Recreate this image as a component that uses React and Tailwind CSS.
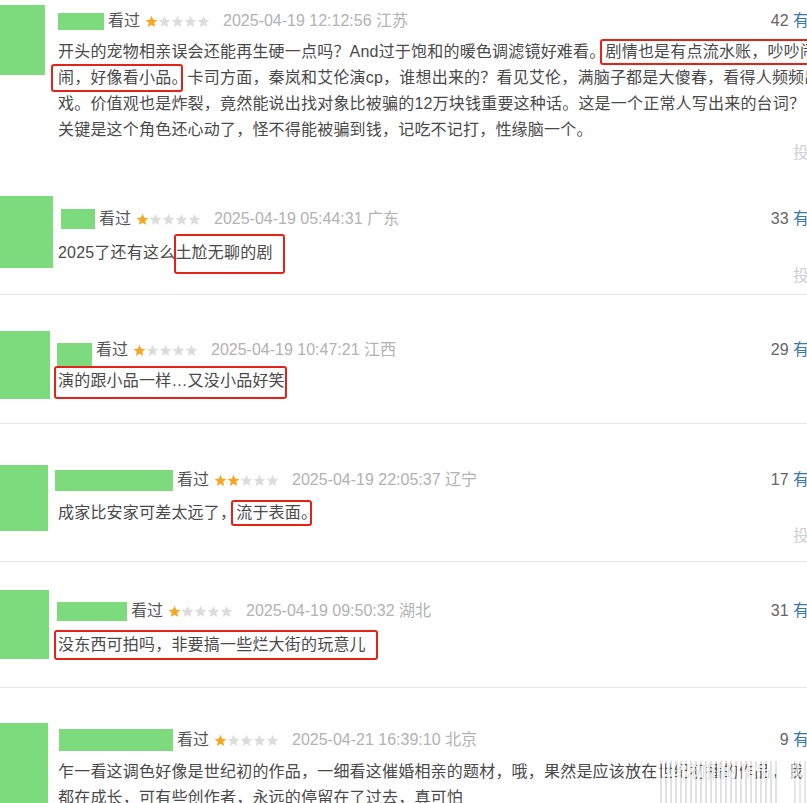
import React from "react"

// one star of the rating row
function Star({ on }) {
  return (
    <svg width="13" height="13" viewBox="0 0 24 24" className="shrink-0">
      <polygon
        points="12,1.5 15.2,8.6 22.8,9.3 17,14.4 18.8,22 12,18 5.2,22 7,14.4 1.2,9.3 8.8,8.6"
        fill={on ? "#f5a623" : "#dcdcdc"}
      />
    </svg>
  )
}

function Stars({ n }) {
  return (
    <span className="flex items-center ml-[5px]">
      {[0, 1, 2, 3, 4].map((i) => (
        <Star key={i} on={i < n} />
      ))}
    </span>
  )
}

// red frame drawn around a quoted phrase
function Mark({ box, children }) {
  return (
    <span className="relative inline-block">
      {children}
      <span className={`absolute border-2 border-[#e2231a] rounded-[3px] pointer-events-none ${box}`} />
    </span>
  )
}

const comments = [
  {
    wrap: "pb-[22px]",
    av: "mt-[5px] w-[45px] h-[70px]",
    head: "pt-[11px]",
    name: "w-[46px] h-[17px] ml-0",
    stars: 1,
    time: "2025-04-19 12:12:56 江苏",
    votes: 42,
    textTop: "mt-[8px]",
    report: true,
    lines: [
      <>开头的宠物相亲误会还能再生硬一点吗？And过于饱和的暖色调滤镜好难看。<Mark box="left-[-5px] right-[-40px] top-0 bottom-0">剧情也是有点流水账，吵吵闹</Mark></>,
      <><Mark box="left-[-7px] right-[5px] top-[-1px] bottom-[-1px]">闹，好像看小品。</Mark>卡司方面，秦岚和艾伦演cp，谁想出来的？看见艾伦，满脑子都是大傻春，看得人频频出</>,
      <>戏。价值观也是炸裂，竟然能说出找对象比被骗的12万块钱重要这种话。这是一个正常人写出来的台词？</>,
      <>关键是这个角色还心动了，怪不得能被骗到钱，记吃不记打，性缘脑一个。</>,
    ],
  },
  {
    wrap: "pb-[8px] border-b border-[#e6e6e6]",
    av: "mt-[11px] w-[53px] h-[72px]",
    head: "pt-[24px]",
    name: "w-[34px] h-[20px] ml-[3px]",
    stars: 1,
    time: "2025-04-19 05:44:31 广东",
    votes: 33,
    textTop: "mt-[11px]",
    report: true,
    lines: [
      <>2025了还有这么<Mark box="left-[-1px] right-[-12px] top-[-6px] bottom-[-8px]">土尬无聊的剧</Mark></>,
    ],
  },
  {
    wrap: "pb-[24px] border-b border-[#e6e6e6]",
    av: "mt-[36px] w-[50px] h-[68px]",
    head: "pt-[45px]",
    name: "w-[35px] h-[23px] -ml-[1px] mt-[8px]",
    stars: 1,
    time: "2025-04-19 10:47:21 江西",
    votes: 29,
    textTop: "mt-[8px]",
    report: false,
    lines: [
      <><Mark box="left-[-4px] right-[-2px] top-[-2px] bottom-[-5px]">演的跟小品一样…又没小品好笑</Mark></>,
    ],
  },
  {
    wrap: "pb-[15px] border-b border-[#e6e6e6]",
    av: "mt-[41px] w-[48px] h-[66px]",
    head: "pt-[46px]",
    name: "w-[118px] h-[21px] -ml-[3px]",
    stars: 2,
    time: "2025-04-19 22:05:37 辽宁",
    votes: 17,
    textTop: "mt-[10px]",
    report: true,
    lines: [
      <>成家比安家可差太远了，<Mark box="left-[-5px] right-[5px] top-0 bottom-0">流于表面。</Mark></>,
    ],
  },
  {
    wrap: "pb-[28px] border-b border-[#e6e6e6]",
    av: "mt-[28px] w-[49px] h-[69px]",
    head: "pt-[39px]",
    name: "w-[70px] h-[19px] -ml-[1px]",
    stars: 1,
    time: "2025-04-19 09:50:32 湖北",
    votes: 31,
    textTop: "mt-[11px]",
    report: false,
    lines: [
      <><Mark box="left-[-4px] right-[-12px] top-[-2px] bottom-[-2px]">没东西可拍吗，非要搞一些烂大街的玩意儿</Mark></>,
    ],
  },
  {
    wrap: "pb-[20px]",
    av: "mt-[35px] w-[48px] h-[90px]",
    head: "pt-[42px]",
    name: "w-[114px] h-[22px] ml-[1px]",
    stars: 1,
    time: "2025-04-21 16:39:10 北京",
    votes: 9,
    textTop: "mt-[9px]",
    report: false,
    smudge: true,
    lines: [
      <>乍一看这调色好像是世纪初的作品，一细看这催婚相亲的题材，哦，果然是应该放在世纪初播的作品，我</>,
      <>都在成长，可有些创作者，永远的停留在了过去，真可怕</>,
    ],
  },
]

function Comment({ c }) {
  return (
    <div className={`flex ${c.wrap}`}>
      <div className="w-[58px] shrink-0">
        <div className={`bg-[#7ddb7d] ${c.av}`} />
      </div>
      <div className={`flex-1 ${c.head}`}>
        <div className="flex items-center h-5 text-[16px]">
          <span className={`bg-[#7ddb7d] shrink-0 ${c.name}`} />
          <span className="ml-[4px] text-[#555]">看过</span>
          <Stars n={c.stars} />
          <span className="ml-[13px] text-[#b2b2b2]">{c.time}</span>
          <span className="ml-auto text-[#666]">
            {c.votes} <span className="text-[#3a77a8]">有用</span>
          </span>
        </div>
        <div className={`relative text-[16px] leading-[26px] tracking-[0.2px] text-[#494949] ${c.textTop}`}>
          {c.lines.map((l, i) => (
            <div key={i} className="whitespace-nowrap">{l}</div>
          ))}
          {c.smudge && (
            <div className="absolute left-[599px] top-[2px] w-[180px] h-[50px] flex">
              <div className="w-[120px] h-full bg-[repeating-linear-gradient(90deg,rgba(255,255,255,0.82)_0px,rgba(255,255,255,0.82)_3px,rgba(140,140,140,0.25)_3px,rgba(140,140,140,0.25)_5px)]" />
              <div className="w-[14px] h-full bg-white" />
              <div className="w-[46px] h-full bg-[repeating-linear-gradient(90deg,rgba(255,255,255,0.6)_0px,rgba(255,255,255,0.6)_3px,rgba(140,140,140,0.2)_3px,rgba(140,140,140,0.2)_5px)]" />
            </div>
          )}
        </div>
        {c.report && (
          <div className="h-5 flex items-center justify-end text-[16px] text-[#cfcfcf]">投诉</div>
        )}
      </div>
    </div>
  )
}

export default function App() {
  return (
    <div className="w-full h-[803px] overflow-hidden bg-white font-['Liberation_Sans','Noto_Sans_CJK_SC',sans-serif]">
      <div className="w-[825px]">
        {comments.map((c, i) => (
          <Comment key={i} c={c} />
        ))}
      </div>
    </div>
  )
}
